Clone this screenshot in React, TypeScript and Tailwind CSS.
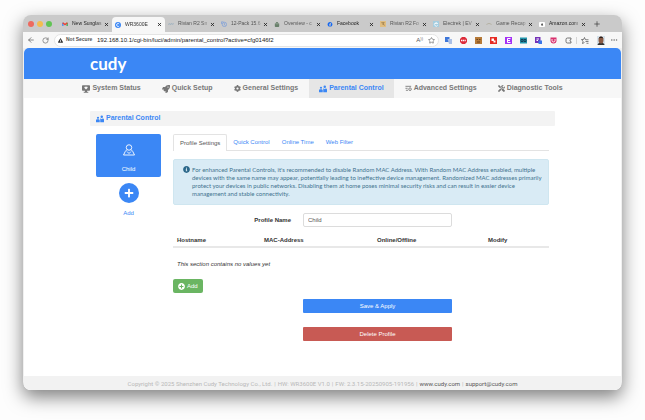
import type { ReactNode } from 'react'
import {
  FaAmazon, FaCog, FaExclamationTriangle, FaFacebook, FaInfoCircle, FaPlus, FaPlusCircle,
  FaRocket, FaShoppingBag, FaTools,
} from 'react-icons/fa'
import { ArrowLeft, MoreHorizontal, Plus, RotateCw, Star, X } from 'lucide-react'

function StatusIcon() {
  return (
    <svg viewBox="0 0 16 16" className="w-2 h-2" fill="currentColor">
      <path fillRule="evenodd" d="M1.500 0.500h13a1.500 1.500 0 0 1 1.500 1.500v8a1.500 1.500 0 0 1-1.500 1.500H10v2h2.500V15.500h-9V13.500H6v-2H1.500A1.500 1.500 0 0 1 0 10V2A1.500 1.500 0 0 1 1.500 .5zM8 9l3-3a1.600 1.600 0 0 0-3-1.900A1.600 1.600 0 0 0 5 6z" />
    </svg>
  )
}

function FamilyIcon() {
  return (
    <svg viewBox="0 0 16 16" className="w-2 h-2" fill="currentColor">
      <circle cx="4" cy="5.500" r="2.200" />
      <circle cx="11.500" cy="3.500" r="2.500" />
      <path d="M0 14.500V10.500a2 2 0 0 1 2-2h4l1.500 2V14.500zM8.500 14.500V7h1.500l1.500 1.500L13 7h1a2 2 0 0 1 2 2v5.500z" />
    </svg>
  )
}

function AdvancedIcon() {
  return (
    <svg viewBox="0 0 16 16" className="w-[7px] h-[7px]" fill="none" stroke="currentColor" strokeWidth="2">
      <path d="M1 3h13M1 7.500h5M2 12h5" />
      <circle cx="11.500" cy="9.500" r="3" />
    </svg>
  )
}

function PersonIcon() {
  return (
    <svg viewBox="0 0 24 24" className="w-3 h-3" fill="none" stroke="currentColor" strokeWidth="1.800" strokeLinejoin="round">
      <circle cx="12" cy="7" r="5.500" />
      <path d="M8 11L4.500 15 1 22h22l-3.500-7L16 11M8 15l4 4 4-4" />
    </svg>
  )
}

const tabs: { title: string; icon: ReactNode; active?: boolean; dark?: boolean }[] = [
  {
    title: 'New Sunglas',
    dark: true,
    icon: (
      <svg viewBox="0 0 14 11" className="w-full" fill="none" strokeWidth="3">
        <path d="M2 11V2" stroke="#4285f4" />
        <path d="M12 11V2" stroke="#34a853" />
        <path d="M1.500 1.500L7 6l5.500-4.500" stroke="#ea4335" />
      </svg>
    ),
  },
  {
    title: 'WR3600E',
    active: true,
    icon: (
      <svg viewBox="0 0 14 14" className="w-full" fill="none">
        <circle cx="7" cy="7" r="7" fill="#3b87f5" />
        <path d="M9.800 4.600a3.500 3.500 0 1 0 0 4.800" stroke="#fff" strokeWidth="2" />
      </svg>
    ),
  },
  {
    title: 'Rivian R2 Sn',
    icon: <svg viewBox="0 0 14 14" className="w-full" fill="none" stroke="#8fa9bd" strokeWidth="2"><path d="M0 6l2 2 2-2 2 2 2-2 2 2 2-2 2 2" /></svg>,
  },
  {
    title: '12-Pack 15.6',
    icon: <svg viewBox="0 0 14 14" className="w-full" fill="none" stroke="#6f97dd" strokeWidth="1.500"><circle cx="8" cy="8" r="5" /><path d="M1 7V2h5M8 5v4l2 1" /></svg>,
  },
  { title: 'Overview - c', icon: <FaShoppingBag className="w-full text-[#68806a]" /> },
  { title: 'Facebook', dark: true, icon: <FaFacebook className="w-full text-[#1769f0]" /> },
  {
    title: 'Rivian R2 Fo',
    icon: <svg viewBox="0 0 14 14" className="w-full"><path d="M0 0h14v14H0z" fill="#e0bd80" /><path d="M3 4h7L6 7l5 3" fill="none" stroke="#8a6a3a" strokeWidth="1.500" /></svg>,
  },
  {
    title: 'Electrek | EV',
    icon: <svg viewBox="0 0 14 14" className="w-full" fill="none"><path d="M0 0h14v14H0z" fill="#a5cde0" /><path d="M11 10a4 4 0 1 1 0-4H4" stroke="#fff" strokeWidth="1.800" /></svg>,
  },
  {
    title: 'Game Recap',
    icon: <svg viewBox="0 0 14 14" className="w-full" fill="none" stroke="#a9a48f" strokeWidth="1.500"><path d="M1 8q6-5 12 0" /></svg>,
  },
  { title: 'Amazon.com', dark: true, icon: <FaAmazon className="w-full rounded-[1px] bg-white p-px text-black" /> },
]

const navItems = [
  { label: 'System Status', icon: <StatusIcon /> },
  { label: 'Quick Setup', icon: <FaRocket className="w-2 h-2" /> },
  { label: 'General Settings', icon: <FaCog className="w-[7px] h-[7px]" /> },
  { label: 'Parental Control', icon: <FamilyIcon />, active: true },
  { label: 'Advanced Settings', icon: <AdvancedIcon /> },
  { label: 'Diagnostic Tools', icon: <FaTools className="w-[7px] h-[7px]" /> },
]

function TabStrip() {
  return (
    <div className="flex h-[17px] bg-[#cacaca] pl-[5px]">
      <div className="flex items-center gap-[3px] pr-[7px]">
        <span className="w-[6px] h-[6px] rounded-full bg-[#ed6a5f]" />
        <span className="w-[6px] h-[6px] rounded-full bg-[#f4bd4f]" />
        <span className="w-[6px] h-[6px] rounded-full bg-[#61c454]" />
      </div>
      {tabs.map((tab) => (
        <div
          key={tab.title}
          className={`flex w-[53px] items-center px-[3px] text-[5px] ${
            tab.active ? 'mt-[2px] h-[15px] rounded-t-[4px] bg-[#f7f7f7] text-[#333]' : tab.dark ? 'h-full pt-px text-[#222]' : 'h-full pt-px text-[#555]'
          }`}
        >
          <span className="flex w-[6px] shrink-0">{tab.icon}</span>
          <span className="ml-[4px] flex-1 whitespace-nowrap font-medium [mask-image:linear-gradient(to_right,black_75%,#0003)]">
            {tab.title}
          </span>
          <button aria-label={`Close ${tab.title}`}>
            <X className="w-[5px] h-[5px] text-[#222]" strokeWidth={4} />
          </button>
        </div>
      ))}
      <button aria-label="New tab" className="ml-[4px]">
        <Plus className="w-2 h-2 text-[#333]" />
      </button>
    </div>
  )
}

function Toolbar() {
  return (
    <div className="flex h-4 items-center bg-[#f7f7f7] px-[4px] text-[#555]">
      <button aria-label="Back"><ArrowLeft className="w-2 h-2" /></button>
      <button aria-label="Reload" className="ml-[7px]"><RotateCw className="w-[7px] h-[7px]" /></button>
      <div className="ml-[5px] flex h-[13px] flex-1 items-center rounded-full border border-[#e4e4e4] bg-white px-[3px]">
        <FaExclamationTriangle className="w-[5px] h-[5px] text-[#333]" />
        <span className="ml-[3px] w-[31px] shrink-0 whitespace-nowrap text-[5px] font-bold">Not Secure</span>
        <input
          aria-label="Address"
          defaultValue="192.168.10.1/cgi-bin/luci/admin/parental_control?active=cfg0146f2"
          className="min-w-0 flex-1 bg-transparent text-[6px] text-[#222] outline-none"
        />
        <span className="text-[6px]">A<sup className="text-[4px]">))</sup></span>
        <Star className="ml-[5px] w-[7px] h-[7px]" />
      </div>
      <div className="ml-[6px] flex items-center gap-2">
        <svg viewBox="0 0 14 14" className="w-[7px] h-[7px]"><path d="M0 0h9v10H0z" fill="#3d76d9" /><path d="M5 4h9v10H8z" fill="#a9bfe6" /></svg>
        <svg viewBox="0 0 14 14" className="w-[7px] h-[7px]"><path d="M4 0h6l4 4v6l-4 4H4l-4-4V4z" fill="#dd2c3b" /><path d="M2 7h10" stroke="#fff" strokeWidth="3" strokeDasharray="2.500 1" /></svg>
        <svg viewBox="0 0 14 14" className="w-[7px] h-[7px]"><path d="M0 0h14v14H0z" fill="#b67a38" /><path d="M3 5h3M8 5h3M4 10h6" stroke="#6e431a" strokeWidth="2" /></svg>
        <svg viewBox="0 0 14 14" className="w-[7px] h-[7px]"><path d="M0 0h14v14H0z" fill="#e62b24" /><path d="M3 3h5v4h3v4H7V8H3z" fill="#fff" /></svg>
        <svg viewBox="0 0 14 14" className="w-[7px] h-[7px]"><path d="M0 0h14v14H0z" fill="#a431f5" /><path d="M11 3H5v8h6M5 7h5" fill="none" stroke="#fff" strokeWidth="2" /></svg>
        <svg viewBox="0 0 14 14" className="w-[7px] h-[7px]"><path d="M0 1h14v12H0z" fill="#2396ac" /><path d="M2 5h4v4H2zM8 5h4v4H8z" fill="none" stroke="#143d55" strokeWidth="2" /></svg>
        <svg viewBox="0 0 14 14" className="w-[7px] h-[7px]"><path d="M0 0h11v12H0z" fill="#7432b8" /><path d="M3 4h5M3 7h3" stroke="#fff" strokeWidth="2" /><path d="M7 7h7v7H7z" fill="#3b76e8" /></svg>
        <svg viewBox="0 0 14 14" className="w-[7px] h-[7px]"><path d="M1 1h12v6a6 6 0 0 1-12 0z" fill="#d8306d" /><path d="M4 4v3a3 3 0 0 0 6 0V4" fill="none" stroke="#fff" strokeWidth="1.800" /></svg>
        <svg viewBox="0 0 14 14" className="w-[7px] h-[7px]" fill="none" stroke="currentColor" strokeWidth="1.600"><path d="M12 5V2H5a3 3 0 0 0-3 3v4a3 3 0 0 0 3 3h7V9a2 2 0 1 1 0-4z" strokeLinejoin="round" /></svg>
      </div>
      <span className="ml-[4px] h-[7px] w-px bg-[#d5d5d5]" />
      <svg viewBox="0 0 16 14" className="ml-[4px] w-2 h-[7px]" fill="none" stroke="currentColor" strokeWidth="1.500">
        <path d="M10 5.500L8.500 5 7 1 5 5H1l3 3.500L3 13l4-2M10 5.500h5M9 9h6M11 12.500h4" strokeLinejoin="round" />
      </svg>
      <svg viewBox="0 0 16 18" className="ml-2 w-2 h-[9px]">
        <path d="M0 0h16v18H0z" fill="#d5e0e8" />
        <path d="M1 18q1-5 7-5t7 5z" fill="#333" />
        <ellipse cx="8" cy="8" rx="5" ry="7" fill="#8a5a44" />
        <path d="M3 6q1-5 5-5t5 5l-2-2H5z" fill="#2b211d" />
      </svg>
      <button aria-label="Menu" className="ml-[5px]"><MoreHorizontal className="w-2 h-2 text-[#777]" /></button>
    </div>
  )
}

function ProfileList() {
  return (
    <aside className="w-[65px] shrink-0 text-center text-[6px]">
      <button className="flex h-[43px] w-full flex-col items-center rounded-[2px] bg-[#3b87f5] pt-[10px] text-white">
        <PersonIcon />
        <span className="mt-[9px] leading-2">Child</span>
      </button>
      <a href="#add" className="mt-[6px] flex flex-col items-center text-[#3b87f5]">
        <span className="flex h-5 w-5 items-center justify-center rounded-full bg-[#3b87f5] text-white">
          <FaPlus className="w-[10px] h-[10px]" />
        </span>
        <span className="mt-[6px] leading-2">Add</span>
      </a>
    </aside>
  )
}

function ProfileSettings() {
  return (
    <section className="min-w-0 flex-1 text-[6px] leading-2">
      <div className="flex h-[17px] border-b border-[#e3e3e3] text-[#3b87f5]">
        <a href="#profile" className="-mb-px flex items-center rounded-t-[2px] border border-b-0 border-[#e3e3e3] bg-white px-[6px] text-[#555]">
          Profile Settings
        </a>
        <a href="#quick" className="flex items-center px-[6px]">Quick Control</a>
        <a href="#time" className="flex items-center px-[6px]">Online Time</a>
        <a href="#filter" className="flex items-center px-[6px]">Web Filter</a>
      </div>

      <div className="mt-2 flex rounded-[2px] border border-[#cfe6f0] bg-[#d9ebf5] py-[6px] pr-[4px] pl-[9px] text-[#3f728f]">
        <FaInfoCircle className="w-[7px] h-[7px] shrink-0 text-[#2d688a]" />
        <p className="ml-[2px] font-['Lato',sans-serif]">
          For enhanced Parental Controls, it's recommended to disable Random MAC Address. With Random MAC Address enabled, multiple
          devices with the same name may appear, potentially leading to ineffective device management. Randomized MAC addresses primarily
          protect your devices in public networks. Disabling them at home poses minimal security risks and can result in easier device
          management and stable connectivity.
        </p>
      </div>

      <div className="mt-2 flex items-center">
        <label htmlFor="profile-name" className="w-[118px] text-right font-bold text-[#333]">Profile Name</label>
        <input
          id="profile-name"
          defaultValue="Child"
          className="ml-3 h-[14px] w-[149px] rounded-[2px] border border-[#dcdcdc] px-[4px] text-[#555] outline-none"
        />
      </div>

      <table className="mt-[7px] w-full table-fixed text-left text-[#333]">
        <thead>
          <tr className="h-[13px] border-b-2 border-[#e8e8e8]">
            <th className="w-[87px] pl-[4px]">Hostname</th>
            <th className="w-[113px] pl-[4px]">MAC-Address</th>
            <th className="w-[111px] pl-[4px]">Online/Offline</th>
            <th className="pl-[4px]">Modify</th>
          </tr>
        </thead>
        <tbody>
          <tr className="h-[32px]">
            <td colSpan={4} className="pl-[4px] italic">This section contains no values yet</td>
          </tr>
        </tbody>
      </table>

      <button className="flex h-[14px] items-center gap-[2px] rounded-[2px] bg-[#6ab562] px-[5px] text-white">
        <FaPlusCircle className="w-[7px] h-[7px]" />
        Add
      </button>
      <div className="mt-[6px] ml-[130px] flex w-[149px] flex-col gap-[14px] text-white">
        <button className="h-[14px] rounded-[1px] bg-[#3b87f5]">Save &amp; Apply</button>
        <button className="h-[14px] rounded-[1px] bg-[#c85a54]">Delete Profile</button>
      </div>
    </section>
  )
}

export default function App() {
  return (
    <div className="min-h-screen bg-[#fdfdfd] px-[23px] pt-[15px] pb-[30px] font-['Liberation_Sans',Arial,sans-serif]">
      <div className="overflow-hidden rounded-[8px] bg-[#f0f0f0] shadow-[0_7px_18px_rgba(0,0,0,0.5)]">
        <TabStrip />
        <Toolbar />
        <div className="mx-px overflow-hidden rounded-t-[5px] bg-white">
          <header className="flex h-[31px] items-center bg-[#3b87f5] px-[66px]">
            <a href="#home" className="font-['Lato',sans-serif] text-[17px] leading-5 font-bold text-white">cudy</a>
          </header>
          <nav className="flex h-[19px] justify-center gap-px bg-[#f7f7f7] text-[7px] font-bold text-[#777]">
            {navItems.map((item) => (
              <a
                key={item.label}
                href="#nav"
                className={`flex items-center gap-[2px] px-[10px] whitespace-nowrap ${item.active ? 'bg-[#e6e6e6] text-[#3b87f5]' : ''}`}
              >
                {item.icon}
                {item.label}
              </a>
            ))}
          </nav>
          <main className="px-[66px] pt-[13px] pb-[35px]">
            <h1 className="flex h-[15px] items-center gap-[2px] rounded-[1px] bg-[#f3f3f3] pl-[6px] text-[7px] font-bold text-[#3b87f5]">
              <FamilyIcon />
              Parental Control
            </h1>
            <div className="mt-2 flex gap-3 px-[6px]">
              <ProfileList />
              <ProfileSettings />
            </div>
          </main>
          <footer className="flex h-[14px] items-center justify-center gap-[2px] bg-[#f2f2f2] font-['Roboto',sans-serif] text-[6px] whitespace-nowrap text-[#b8b8b8]">
            <span>Copyright © 2025 Shenzhen Cudy Technology Co., Ltd.</span>
            <span>|</span>
            <span>HW: WR3600E V1.0</span>
            <span>|</span>
            <span>FW: 2.3.15-20250905-191956</span>
            <span>|</span>
            <a href="#site" className="text-[#555]">www.cudy.com</a>
            <span>|</span>
            <a href="mailto:support@cudy.com" className="text-[#555]">support@cudy.com</a>
          </footer>
        </div>
      </div>
    </div>
  )
}
